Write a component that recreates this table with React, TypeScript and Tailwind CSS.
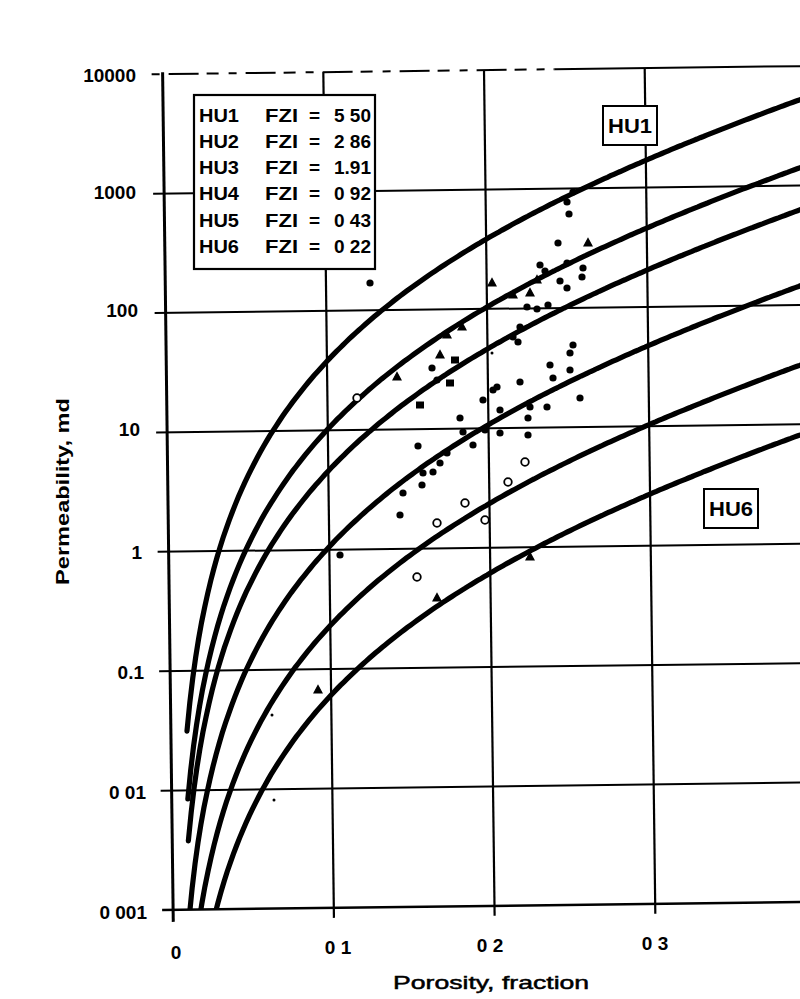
import React from 'react';

// FZI curves: k = 1014 * FZI^2 * phi^3 / (1 - phi)^2
const units = [5.5, 2.86, 1.91, 0.92, 0.43, 0.22];

const X = (phi: number) => 168 + 1607 * phi;
const Y = (k: number) => 906 - 119.4 * (Math.log10(k) + 3);

function curvePath(fzi: number) {
    const pts: string[] = [];
    for (let phi = 0.01; phi <= 0.43; phi += 0.002) {
        const k = (1014 * fzi * fzi * phi ** 3) / (1 - phi) ** 2;
        pts.push(`${X(phi).toFixed(1)},${Y(k).toFixed(1)}`);
    }
    return 'M' + pts.join(' L');
}

const decades = [1000, 100, 10, 1, 0.1, 0.01, 0.001];
const porosities = [0.1, 0.2, 0.3];

const yLabels = [
    { t: '10000', x: 136, y: 75 },
    { t: '1000', x: 136, y: 192 },
    { t: '100', x: 138, y: 310 },
    { t: '10', x: 140, y: 429 },
    { t: '1', x: 142, y: 552 },
    { t: '0.1', x: 144, y: 672 },
    { t: '0 01', x: 146, y: 792 },
    { t: '0 001', x: 147, y: 912 },
];

const xLabels = [
    { t: '0', x: 176, y: 952 },
    { t: '0 1', x: 338, y: 947 },
    { t: '0 2', x: 490, y: 945 },
    { t: '0 3', x: 655, y: 943 },
];

const legend = [
    ['HU1', '5 50'],
    ['HU2', '2 86'],
    ['HU3', '1.91'],
    ['HU4', '0 92'],
    ['HU5', '0 43'],
    ['HU6', '0 22'],
];
const rowY = [115, 141, 167, 193, 220, 246];

const filled = [
    [573, 192], [567, 202], [569, 214], [558, 243], [540, 265], [545, 271], [567, 263], [583, 268],
    [560, 281], [567, 288], [582, 277], [527, 307], [537, 309], [548, 305], [520, 327], [513, 337],
    [518, 342], [573, 345], [570, 353], [550, 365], [570, 370], [553, 378], [580, 398], [547, 407],
    [530, 407], [520, 382], [497, 387], [493, 390], [483, 400], [500, 410], [460, 418], [463, 432],
    [473, 445], [485, 430], [500, 433], [528, 435], [447, 453], [440, 463], [433, 472], [423, 473],
    [422, 485], [403, 493], [400, 515], [418, 446], [432, 368], [437, 380], [370, 283], [340, 555],
    [528, 418],
];
const squares = [[420, 405], [450, 383], [455, 360]];
const triangles = [
    [588, 243], [537, 280], [513, 295], [530, 293], [440, 355], [447, 335], [462, 327], [397, 377],
    [530, 557], [318, 690], [492, 283], [437, 598],
];
const open = [[525, 462], [465, 503], [485, 520], [437, 523], [417, 577], [508, 482], [357, 398]];
const tiny = [[272, 715], [274, 800], [492, 353]];

function Chart() {
    return (
        <svg width={716} height={972} viewBox="84 0 716 972" className="block shrink-0">
            <defs>
                <clipPath id="plot">
                    <rect x={168} y={60} width={700} height={846} />
                </clipPath>
            </defs>

            {/* grid, axes and curves - the scan is turned a little */}
            <g transform="rotate(-0.72 480 500)" stroke="#000" fill="none">
                <line x1={157} x2={560} y1={Y(10000)} y2={Y(10000)} strokeWidth={2} strokeDasharray="8 9 30 8 12 10" />
                <line x1={560} x2={870} y1={Y(10000)} y2={Y(10000)} strokeWidth={2} />
                {decades.map((d) => (
                    <line key={d} x1={157} x2={870} y1={Y(d)} y2={Y(d)} strokeWidth={d === 0.001 ? 2.5 : 2} />
                ))}
                {porosities.map((p) => (
                    <line key={p} x1={X(p)} x2={X(p)} y1={Y(10000)} y2={916} strokeWidth={2.2} />
                ))}
                <line x1={168} x2={168} y1={Y(10000) - 2} y2={918} strokeWidth={3} />
                <g clipPath="url(#plot)">
                    {units.map((f) => (
                        <path key={f} d={curvePath(f)} strokeWidth={5.2} strokeLinecap="round" />
                    ))}
                </g>
            </g>

            {/* measured core points */}
            <g fill="#000">
                {filled.map(([x, y], i) => (
                    <circle key={'f' + i} cx={x} cy={y} r={3.6} />
                ))}
                {squares.map(([x, y], i) => (
                    <rect key={'s' + i} x={x - 4} y={y - 3.5} width={8} height={7} />
                ))}
                {triangles.map(([x, y], i) => (
                    <path key={'t' + i} d={`M${x} ${y - 4.5} L${x + 4} ${y + 3} L${x - 4} ${y + 3} Z`} stroke="#000" strokeWidth={1.2} />
                ))}
                {open.map(([x, y], i) => (
                    <circle key={'o' + i} cx={x} cy={y} r={3.8} fill="#fff" stroke="#000" strokeWidth={1.8} />
                ))}
                {tiny.map(([x, y], i) => (
                    <circle key={'d' + i} cx={x} cy={y} r={1.5} />
                ))}
            </g>

            {/* legend */}
            <rect x={194} y={95} width={181} height={174} fill="#fff" stroke="#000" strokeWidth={2.2} />
            <g fontWeight="bold" fontSize={19} fill="#000">
                {legend.map(([hu, v], i) => (
                    <g key={hu}>
                        <text x={199} y={rowY[i] + 7} textLength={40} lengthAdjust="spacingAndGlyphs">{hu}</text>
                        <text x={265} y={rowY[i] + 7} textLength={33} lengthAdjust="spacingAndGlyphs">FZI</text>
                        <text x={309} y={rowY[i] + 7}>=</text>
                        <text x={371} y={rowY[i] + 7} textAnchor="end">{v}</text>
                    </g>
                ))}
            </g>

            {/* curve labels */}
            <rect x={603} y={106} width={54} height={39} fill="#fff" stroke="#000" strokeWidth={2} />
            <text x={630} y={133} textAnchor="middle" fontSize={20} fontWeight="bold" textLength={44} lengthAdjust="spacingAndGlyphs">HU1</text>
            <rect x={704} y={489} width={54} height={39} fill="#fff" stroke="#000" strokeWidth={2} />
            <text x={731} y={516} textAnchor="middle" fontSize={20} fontWeight="bold" textLength={44} lengthAdjust="spacingAndGlyphs">HU6</text>

            {/* tick labels */}
            <g fontWeight="bold" fontSize={19} fill="#000">
                {yLabels.map((l) => (
                    <text key={l.t} x={l.x} y={l.y + 7} textAnchor="end">{l.t}</text>
                ))}
                {xLabels.map((l) => (
                    <text key={l.t} x={l.x} y={l.y + 7} textAnchor="middle">{l.t}</text>
                ))}
            </g>
        </svg>
    );
}

export default function App() {
    return (
        <div className="flex flex-col w-[800px] h-[999px] bg-white overflow-hidden text-black font-['Liberation_Sans',Arial,sans-serif]">
            <div className="flex">
                <div className="flex w-[84px] h-[972px] shrink-0 items-center justify-center pl-[40px] pt-[10px]">
                    <span className="shrink-0 whitespace-nowrap text-[19px] font-bold leading-none -rotate-90 scale-x-[1.24]">
                        Permeability, md
                    </span>
                </div>
                <Chart />
            </div>
            <div className="h-[27px] pl-[393px]">
                <span className="inline-block origin-left whitespace-nowrap text-[19px] leading-none scale-x-[1.4] [-webkit-text-stroke:0.5px_black]">
                    Porosity, fraction
                </span>
            </div>
        </div>
    );
}
